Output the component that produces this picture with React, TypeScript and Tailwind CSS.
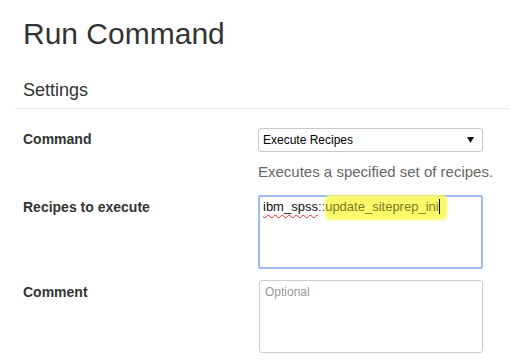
import React from "react";

export default function App() {
  return (
    <div
      className="w-[509px] h-[363px] bg-white overflow-hidden text-[#333]"
      style={{ fontFamily: '"Liberation Sans", Arial, sans-serif' }}
    >
      <h1 className="pl-[23px] pt-[17px] text-[30px] leading-[33px] text-[#333]">Run Command</h1>
      <div className="ml-[15px] mt-[28px] border-b border-[#e5e5e5] pl-[8px] pb-[6px] text-[18px] leading-[24px] text-[#333]">
        Settings
      </div>

      <div className="pl-[23px] pt-[19px] flex flex-col">
        {/* Command row */}
        <div className="flex">
          <div className="w-[235px] pt-[1px] text-[14px] leading-[20px] font-bold">Command</div>
          <div className="w-[225px] flex flex-col">
            <div className="h-[24px] w-[225px] rounded-[3px] border border-[#c8c8c8] flex items-center justify-between pl-[4px] pr-[8px] text-[12px] text-black">
              <span>Execute Recipes</span>
              <svg width="7" height="6" viewBox="0 0 7 6">
                <path d="M0 0 L7 0 L3.5 6 Z" fill="#111" />
              </svg>
            </div>
            <div className="mt-[9px] text-[15px] leading-[22px] text-[#666] whitespace-nowrap">
              Executes a specified set of recipes.
            </div>
          </div>
        </div>

        {/* Recipes row */}
        <div className="flex mt-[12px]">
          <div className="w-[235px] pt-[2px] text-[14px] leading-[20px] font-bold">Recipes to execute</div>
          <div className="relative h-[74px] w-[225px] rounded-[2px] border-2 border-[#9bbcf3] px-[3px] pt-[1px] text-[13px] leading-[18px]">
            <span className="underline decoration-wavy decoration-[#e03030] decoration-1 underline-offset-[3px] text-[#111]">
              ibm_spss
            </span>
            <span className="text-[#333]">::</span>
            <span className="relative inline-block">
              <span className="absolute left-[0px] right-[-7px] top-[-3px] bottom-[-4px] bg-[#fbfb6a] rounded-[5px] blur-[1px]" />
              <span className="relative text-[#7a7a25]">update_siteprep_ini</span>
              <span className="relative inline-block w-[1px] h-[15px] bg-black align-[-3px]" />
            </span>
          </div>
        </div>

        {/* Comment row */}
        <div className="flex mt-[11px]">
          <div className="w-[235px] pt-[2px] text-[14px] leading-[20px] font-bold">Comment</div>
          <div className="ml-[1px] h-[73px] w-[224px] rounded-[3px] border border-[#cccccc] px-[5px] pt-[3px] text-[12px] leading-[16px] text-[#999]">
            Optional
          </div>
        </div>
      </div>
    </div>
  );
}
